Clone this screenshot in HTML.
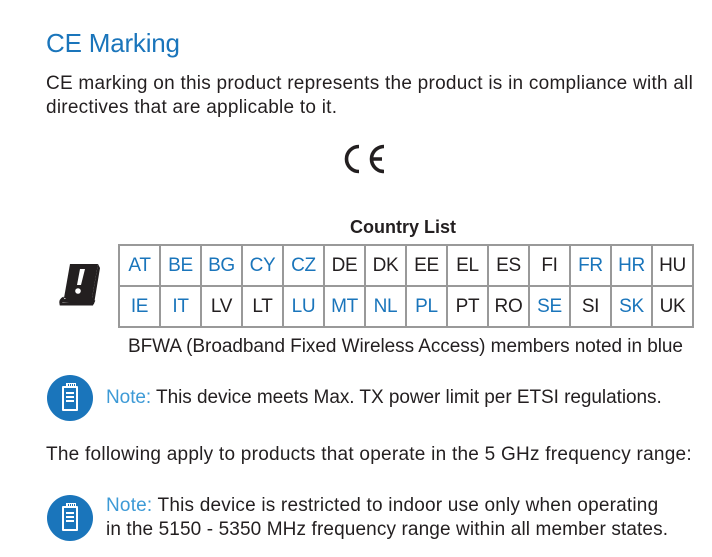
<!DOCTYPE html>
<html><head><style>
body{margin:0;width:712px;height:557px;background:#fff;font-family:"Liberation Sans",sans-serif;color:#231f20;position:relative;overflow:hidden}
.a{position:absolute;white-space:nowrap}
.t{font-size:19px;letter-spacing:0.25px}
.b{color:#1a75bb}
.n{color:#3d9ad6}
table{position:absolute;left:118px;top:244px;border-collapse:collapse}
td{border:2px solid #999;width:39px;height:39px;text-align:center;font-size:19px;letter-spacing:-0.3px;padding:0}
.ic{position:absolute;width:46px;height:46px;border-radius:50%;background:#1a75bb}
.ic div{position:absolute;left:15px;top:11px;width:12px;height:21px;border:2px solid #fff;border-radius:1px}
.ic div i{position:absolute;left:2px;width:8px;height:2px;background:#fff}
.ic div b{position:absolute;left:2px;top:-5px;width:8px;height:4px;border:1px solid #fff;border-bottom:none;background:repeating-linear-gradient(90deg,#fff 0 1px,transparent 1px 2px)}
</style></head><body>
<div class="a b" style="left:46px;top:28px;font-size:26px;letter-spacing:-0.2px">CE Marking</div>
<div class="a t" style="left:46px;top:73px">CE marking on this product represents the product is in compliance with all</div>
<div class="a t" style="left:46px;top:97px">directives that are applicable to it.</div>
<svg class="a" style="left:344px;top:143px" width="44" height="32" viewBox="0 0 44 32">
<path d="M15 3.5 A12.5 12.5 0 0 0 15 28.5" fill="none" stroke="#231f20" stroke-width="3.6"/>
<path d="M40 3.5 A12.5 12.5 0 0 0 40 28.5 M28 16 H38" fill="none" stroke="#231f20" stroke-width="3.6"/>
</svg>
<div class="a" style="left:350px;top:217px;font-size:18px;font-weight:bold;letter-spacing:0px">Country List</div>
<svg class="a" style="left:58px;top:262px" width="44" height="46" viewBox="0 0 44 46">
<path d="M12 2 H40 L34 36 H6 Z" fill="#231f20"/>
<path d="M6 36 Q2 38 3 42 H34 L36 38" fill="none" stroke="#231f20" stroke-width="3"/>
<path d="M3 40 L8 36 L34 36 L40 2 L42 6 L36 42 Z" fill="#231f20"/>
<path d="M22 7 L27 7 L23 23 L19 23 Z" fill="#fff"/>
<circle cx="20" cy="29" r="2.8" fill="#fff"/>
</svg>
<table>
<tr><td class="b">AT</td><td class="b">BE</td><td class="b">BG</td><td class="b">CY</td><td class="b">CZ</td><td>DE</td><td>DK</td><td>EE</td><td>EL</td><td>ES</td><td>FI</td><td class="b">FR</td><td class="b">HR</td><td>HU</td></tr>
<tr><td class="b">IE</td><td class="b">IT</td><td>LV</td><td>LT</td><td class="b">LU</td><td class="b">MT</td><td class="b">NL</td><td class="b">PL</td><td>PT</td><td>RO</td><td class="b">SE</td><td>SI</td><td class="b">SK</td><td>UK</td></tr>
</table>
<div class="a t" style="left:128px;top:336px;letter-spacing:-0.05px">BFWA (Broadband Fixed Wireless Access) members noted in blue</div>
<div class="ic" style="left:47px;top:375px"><div><b></b><i style="top:4px"></i><i style="top:8px"></i><i style="top:12px"></i></div></div>
<div class="a t" style="left:106px;top:387px;letter-spacing:-0.05px"><span class="n">Note:</span> This device meets Max. TX power limit per ETSI regulations.</div>
<div class="a t" style="left:46px;top:444px">The following apply to products that operate in the 5 GHz frequency range:</div>
<div class="ic" style="left:47px;top:495px"><div><b></b><i style="top:4px"></i><i style="top:8px"></i><i style="top:12px"></i></div></div>
<div class="a t" style="left:106px;top:495px;letter-spacing:0.2px"><span class="n">Note:</span> This device is restricted to indoor use only when operating</div>
<div class="a t" style="left:106px;top:519px;letter-spacing:0.12px">in the 5150 - 5350 MHz frequency range within all member states.</div>
</body></html>
